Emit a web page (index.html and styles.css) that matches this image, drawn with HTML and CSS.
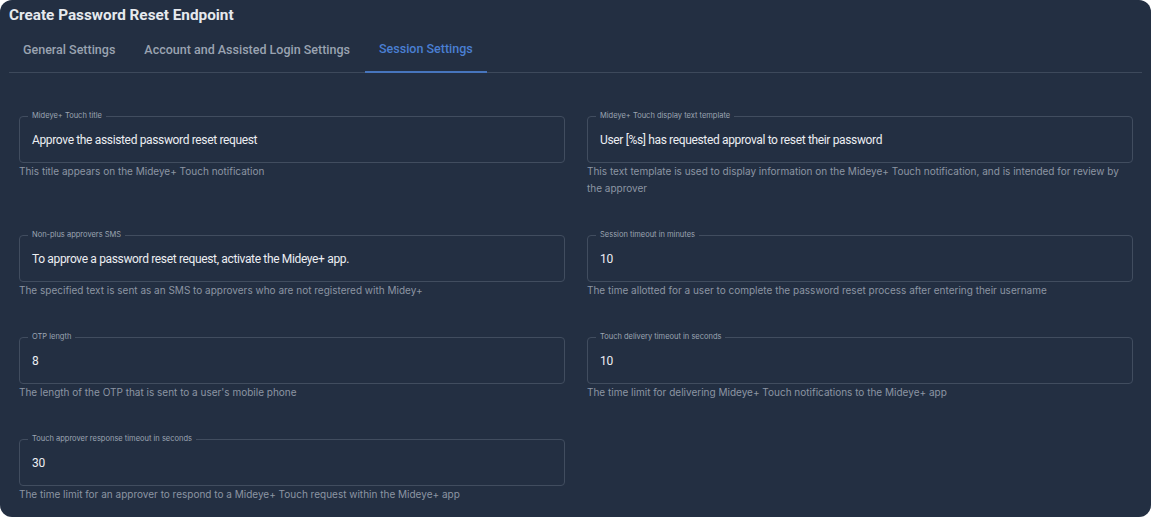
FILE: index.html
```html
<!DOCTYPE html>
<html lang="en">
<head>
<meta charset="utf-8">
<title>Create Password Reset Endpoint</title>
<link rel="stylesheet" href="styles.css">
</head>
<body>
<div class="card">
  <h1 class="title">Create Password Reset Endpoint</h1>
  <nav class="tabs">
    <span class="tab">General Settings</span>
    <span class="tab">Account and Assisted Login Settings</span>
    <span class="tab active">Session Settings</span>
  </nav>
  <div class="form">
    <div class="field">
      <fieldset class="box"><legend>Mideye+ Touch title</legend><span class="value">Approve the assisted password reset request</span></fieldset>
      <p class="help">This title appears on the Mideye+ Touch notification</p>
    </div>
    <div class="field">
      <fieldset class="box"><legend>Mideye+ Touch display text template</legend><span class="value">User [%s] has requested approval to reset their password</span></fieldset>
      <p class="help">This text template is used to display information on the Mideye+ Touch notification, and is intended for review by the approver</p>
    </div>
    <div class="field">
      <fieldset class="box"><legend>Non-plus approvers SMS</legend><span class="value">To approve a password reset request, activate the Mideye+ app.</span></fieldset>
      <p class="help">The specified text is sent as an SMS to approvers who are not registered with Midey+</p>
    </div>
    <div class="field">
      <fieldset class="box"><legend>Session timeout in minutes</legend><span class="value">10</span></fieldset>
      <p class="help">The time allotted for a user to complete the password reset process after entering their username</p>
    </div>
    <div class="field">
      <fieldset class="box"><legend>OTP length</legend><span class="value">8</span></fieldset>
      <p class="help">The length of the OTP that is sent to a user's mobile phone</p>
    </div>
    <div class="field">
      <fieldset class="box"><legend>Touch delivery timeout in seconds</legend><span class="value">10</span></fieldset>
      <p class="help">The time limit for delivering Mideye+ Touch notifications to the Mideye+ app</p>
    </div>
    <div class="field">
      <fieldset class="box"><legend>Touch approver response timeout in seconds</legend><span class="value">30</span></fieldset>
      <p class="help">The time limit for an approver to respond to a Mideye+ Touch request within the Mideye+ app</p>
    </div>
  </div>
</div>
</body>
</html>
```
FILE: styles.css
```css
html, body {
  margin: 0;
  padding: 0;
  background: #ffffff;
}
body {
  font-family: Inter, "Noto Sans", "Liberation Sans", sans-serif;
}
.card {
  box-sizing: border-box;
  width: 1151px;
  height: 517px;
  background: #232f42;
  border-radius: 12px;
  padding: 5px 9px 0 9px;
  overflow: hidden;
}
.title {
  margin: 0;
  font-family: Roboto, "Liberation Sans", sans-serif;
  font-size: 15.3px;
  line-height: 20px;
  font-weight: 700;
  color: #e6e9ee;
}
.tabs {
  display: flex;
  height: 47px;
  border-bottom: 1px solid #3d495b;
}
.tab {
  display: flex;
  align-items: center;
  padding: 1px 14px 0 14px;
  font-family: Roboto, "Liberation Sans", sans-serif;
  font-size: 12.5px;
  font-weight: 500;
  color: #9aa3b1;
  box-sizing: border-box;
}
.tab + .tab {
  margin-left: 1px;
}
.tab.active {
  color: #4a7fd3;
  border-bottom: 2px solid #4775bd;
  margin-bottom: -1px;
}
.form {
  display: grid;
  grid-template-columns: 546px 546px;
  column-gap: 22px;
  row-gap: 33px;
  padding: 38px 0 0 10px;
  align-items: start;
}
.field {
  display: flex;
  flex-direction: column;
}
.box {
  margin: 0;
  padding: 0 12px;
  border: 1px solid #414d5f;
  border-radius: 4px;
}
.box legend {
  font-size: 7.5px;
  line-height: 10px;
  color: #9ca5b2;
  padding: 0 4px;
  margin-left: -4px;
}
.value {
  display: block;
  font-family: Roboto, "Liberation Sans", sans-serif;
  font-size: 12px;
  letter-spacing: -0.35px;
  line-height: 16px;
  padding: 11px 0 14px 0;
  color: #eceef2;
}
.help {
  margin: 0;
  font-size: 10px;
  line-height: 17px;
  color: #8c95a3;
}
```
